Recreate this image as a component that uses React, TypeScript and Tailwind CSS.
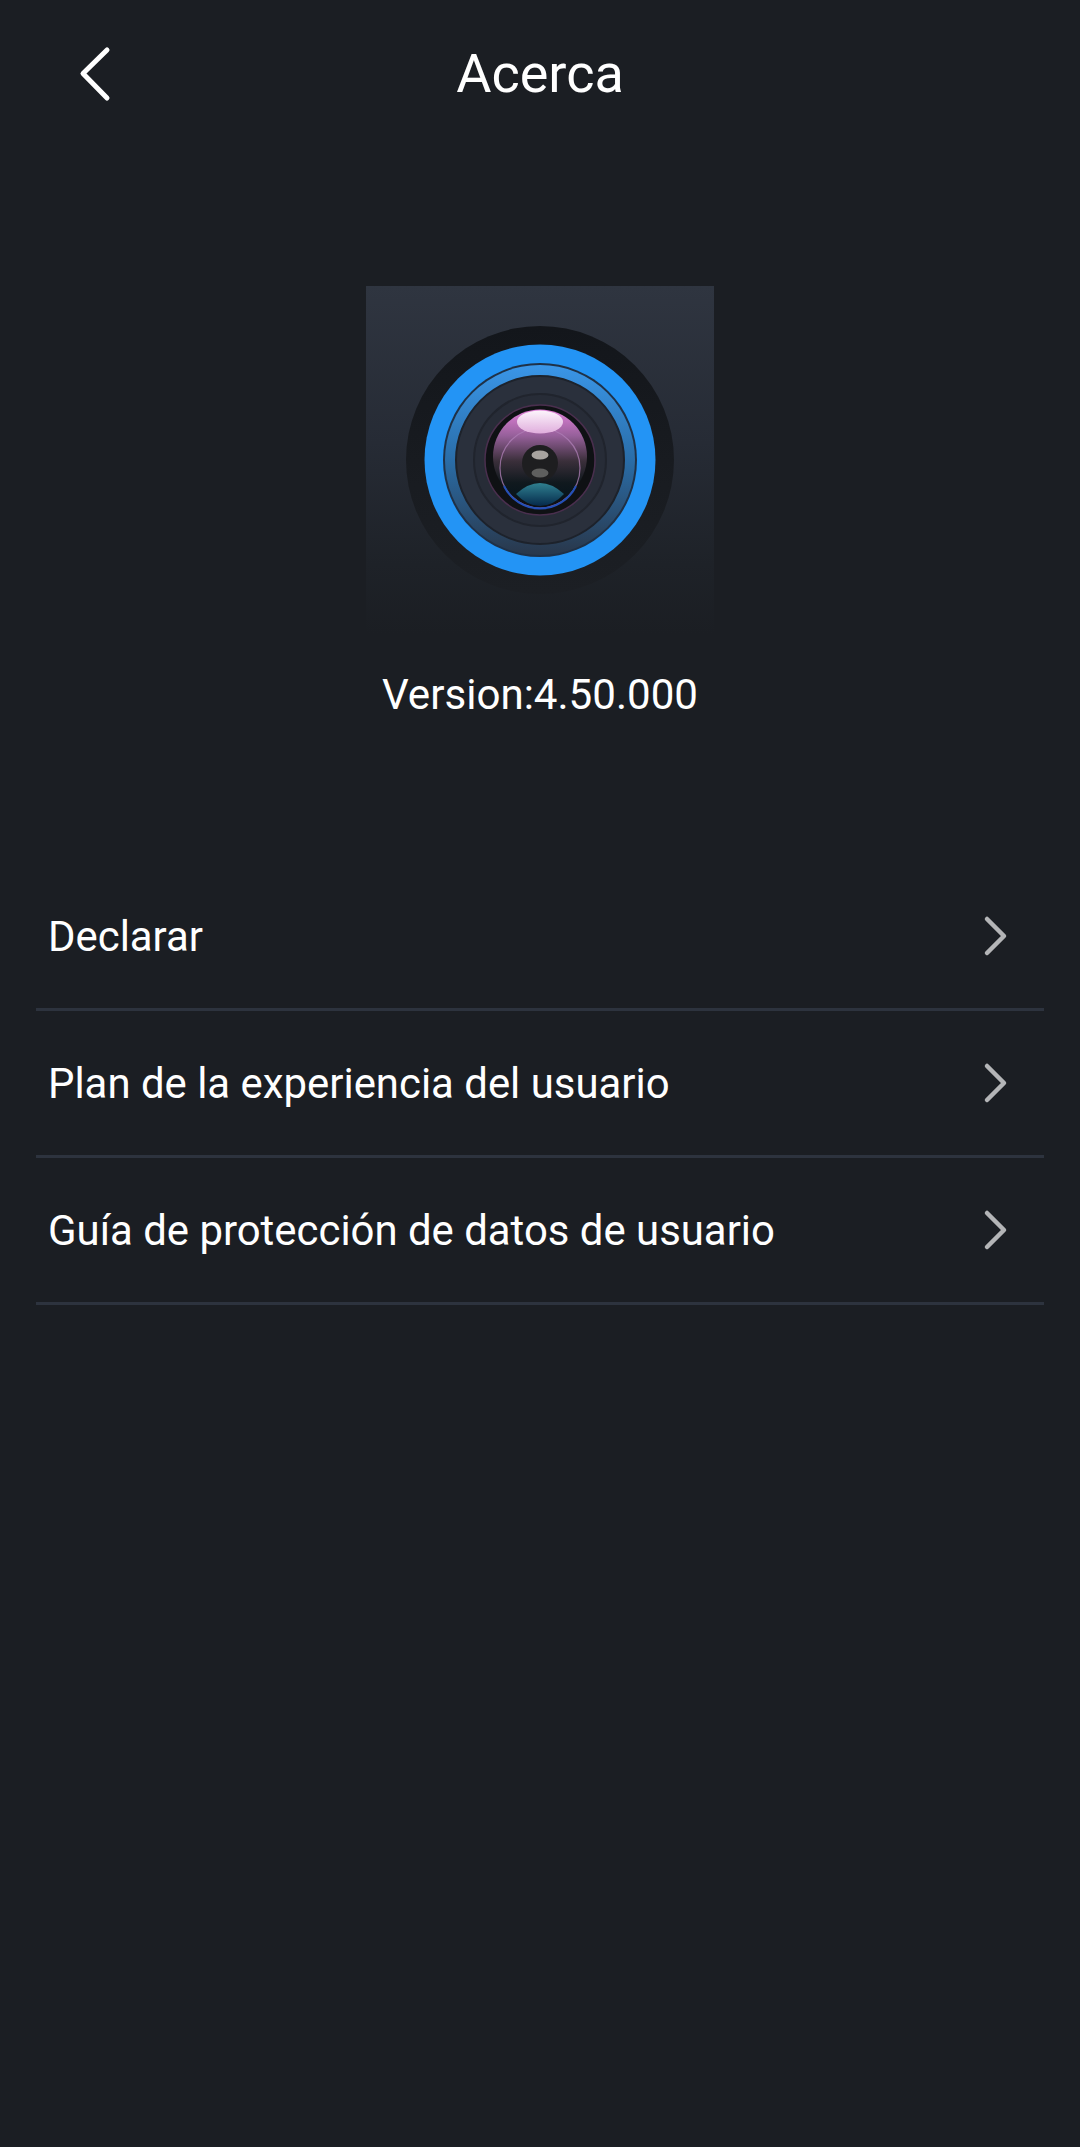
import React from "react";

const rows = [
  "Declarar",
  "Plan de la experiencia del usuario",
  "Guía de protección de datos de usuario",
];

function BackIcon() {
  return (
    <svg width="44" height="60" viewBox="0 0 44 60" fill="none" className="block">
      <path d="M38 7 L14 30.5 L38 55" stroke="#ffffff" strokeWidth="5" strokeLinecap="round" strokeLinejoin="round" />
    </svg>
  );
}

function ChevronIcon() {
  return (
    <svg width="28" height="44" viewBox="0 0 28 44" fill="none" className="block">
      <path d="M5 5 L22 22 L5 39" stroke="#b4b5b7" strokeWidth="4.5" strokeLinecap="round" strokeLinejoin="round" />
    </svg>
  );
}

function AppLogo() {
  return (
    <svg width="348" height="348" viewBox="0 0 348 348" className="block">
      <defs>
        <linearGradient id="tile" x1="0" y1="0" x2="0" y2="1">
          <stop offset="0" stopColor="#2f3540" />
          <stop offset="0.45" stopColor="#262b35" />
          <stop offset="0.8" stopColor="#1e2228" />
          <stop offset="1" stopColor="#1b1e23" />
        </linearGradient>
        <linearGradient id="housing" x1="0" y1="0" x2="0" y2="1">
          <stop offset="0" stopColor="#13161b" />
          <stop offset="0.6" stopColor="#191c21" />
          <stop offset="1" stopColor="#1c1f24" />
        </linearGradient>
        <linearGradient id="blueBand" x1="0" y1="0" x2="0" y2="1">
          <stop offset="0" stopColor="#3a96e8" />
          <stop offset="0.5" stopColor="#2a6da8" />
          <stop offset="1" stopColor="#29374a" />
        </linearGradient>
        <linearGradient id="glass" x1="0" y1="0" x2="0" y2="1">
          <stop offset="0" stopColor="#e080d8" />
          <stop offset="0.28" stopColor="#96609a" />
          <stop offset="0.55" stopColor="#3a2f3a" />
          <stop offset="0.78" stopColor="#10191e" />
          <stop offset="1" stopColor="#04131c" />
        </linearGradient>
        <linearGradient id="glare" x1="0" y1="0" x2="0" y2="1">
          <stop offset="0" stopColor="#ffffff" />
          <stop offset="1" stopColor="#e6b4e2" />
        </linearGradient>
        <linearGradient id="teal" x1="0" y1="0" x2="0" y2="1">
          <stop offset="0" stopColor="#2f8090" />
          <stop offset="1" stopColor="#05294a" />
        </linearGradient>
      </defs>
      <rect width="348" height="348" fill="url(#tile)" />
      <circle cx="174" cy="174" r="134" fill="url(#housing)" />
      <circle cx="174" cy="174" r="115.5" fill="#2394f5" />
      <circle cx="174" cy="174" r="97" fill="#1f3147" />
      <circle cx="174" cy="174" r="95" fill="url(#blueBand)" />
      <circle cx="174" cy="174" r="84" fill="#2a303c" stroke="#1d222b" strokeWidth="2" />
      <circle cx="174" cy="174" r="66" fill="#272c37" stroke="#20242d" strokeWidth="2" />
      <circle cx="174" cy="174" r="55" fill="#0f1114" stroke="#4a2f4e" strokeWidth="1.5" />
      <circle cx="174" cy="170.5" r="47" fill="url(#glass)" />
      <circle cx="174" cy="182" r="40" fill="none" stroke="#b080b8" strokeWidth="1.2" opacity="0.75" />
      <path d="M150 208 Q174 186 198 208 Q187 220 174 220 Q161 220 150 208 Z" fill="url(#teal)" />
      <path d="M138 200 A40 40 0 0 0 210 200" fill="none" stroke="#2450b8" strokeWidth="2" />
      <ellipse cx="174" cy="136" rx="23" ry="11.5" fill="url(#glare)" opacity="0.92" />
      <circle cx="174" cy="177" r="18" fill="#1e1e20" />
      <ellipse cx="174" cy="169" rx="8.5" ry="4.5" fill="#a8a4a0" />
      <ellipse cx="174" cy="187" rx="8.5" ry="4.5" fill="#5f5f5e" />
    </svg>
  );
}

export default function App() {
  return (
    <div
      className="flex min-h-[2147px] w-[1080px] flex-col bg-[#1b1e23] text-white"
      style={{ fontFamily: "Roboto, 'Noto Sans', sans-serif" }}
    >
      <header className="relative flex h-[148px] items-center justify-center">
        <button className="absolute left-[69px] top-[43px]">
          <BackIcon />
        </button>
        <h1 className="text-[54px] font-normal leading-none">Acerca</h1>
      </header>

      <section className="mt-[138px] flex flex-col items-center">
        <AppLogo />
        <p className="mt-[36px] text-[42.1px] leading-[50px]">Version:4.50.000</p>
      </section>

      <ul className="mx-[36px] mt-[144px]">
        {rows.map((label) => (
          <li
            key={label}
            className="flex h-[147px] items-center justify-between border-b-[3px] border-[#2d333e] pl-[12px] pr-[34px]"
          >
            <span className="pt-[2px] text-[41.9px] leading-[50px]">{label}</span>
            <ChevronIcon />
          </li>
        ))}
      </ul>
    </div>
  );
}
